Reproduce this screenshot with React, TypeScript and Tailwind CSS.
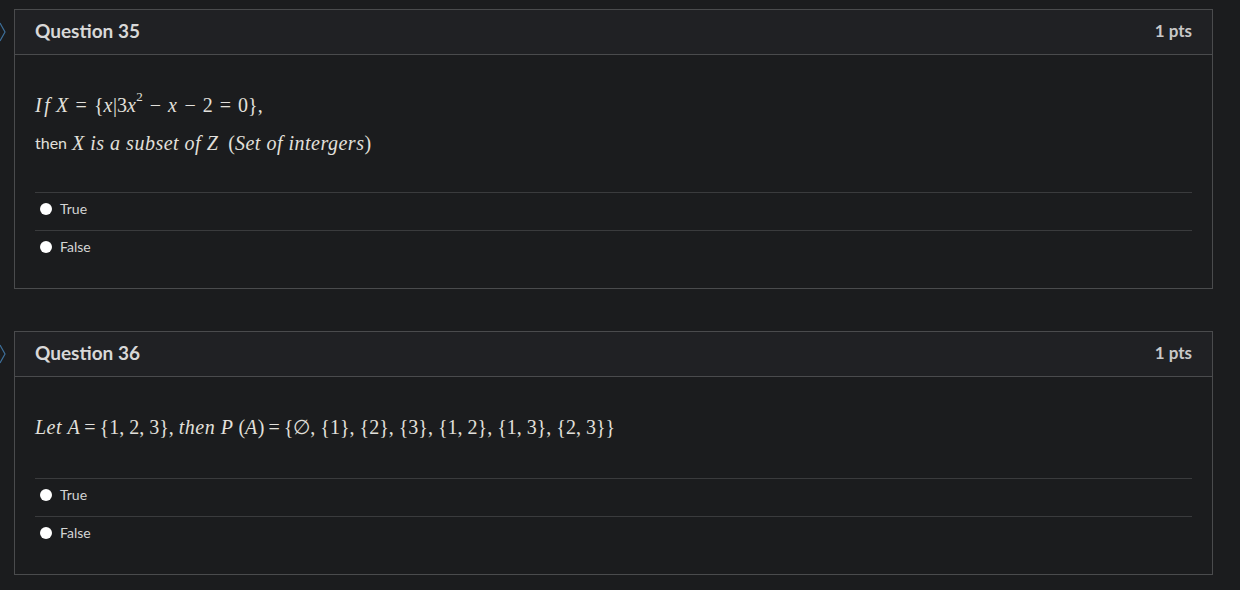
import React from 'react'

const serif = { fontFamily: '"Liberation Serif", "DejaVu Serif", serif' }

function I({ children }: { children: React.ReactNode }) {
    return <span className="italic tracking-[0.5px]">{children}</span>
}

function Op({ children, wide }: { children: React.ReactNode; wide?: boolean }) {
    return <span className={wide ? 'mx-[7px]' : 'mx-[4px]'}>{children}</span>
}

function Chevron() {
    return (
        <svg width="14" height="20" viewBox="0 0 14 20" className="block">
            <polyline points="0,1 5,10 0,19" fill="none" stroke="#3d6f9a" strokeWidth="1.2" />
        </svg>
    )
}

function Answer({ label }: { label: string }) {
    return (
        <div className="h-[38px] border-t border-[#3a3b3d] flex items-center pl-[5px] pb-[6px] gap-[8px]">
            <div className="w-[12px] h-[12px] rounded-full bg-white" />
            <span className="text-[14px] text-[#d4d4d4]">{label}</span>
        </div>
    )
}

function Question({ num, gap, children }: { num: number; gap: string; children: React.ReactNode }) {
    return (
        <div className="flex items-start">
            <div className="w-[14px] pt-[13px]">
                <Chevron />
            </div>
            <div className="w-[1199px] border border-[#4a4b4d]">
                <div className="h-[45px] bg-[#202124] border-b border-[#4a4b4d] flex items-center justify-between px-[20px] pb-[2px]">
                    <h2 className="text-[19px] font-bold text-[#d8d8d8]">Question {num}</h2>
                    <span className="text-[17px] font-bold text-[#c8c8c8]">1 pts</span>
                </div>
                <div className="px-[20px] pt-[20px] pb-[20px]">
                    <div className={`pt-[11px] text-[#e2e0dc] ${gap}`}>{children}</div>
                    <Answer label="True" />
                    <Answer label="False" />
                </div>
            </div>
        </div>
    )
}

export default function App() {
    return (
        <div className="min-h-[590px] bg-[#1b1c1e] pt-[9px] flex flex-col gap-[42px]" style={{ fontFamily: 'Lato, "Open Sans", sans-serif' }}>
            <Question num={35} gap="pb-[30px]">
                <div className="h-[38px] flex items-center text-[20px]" style={serif}>
                    <I>I&#8202;f&nbsp;X</I>
                    <Op wide>=</Op>
                    <span>{'{'}</span>
                    <I>x</I>
                    <span>|3</span>
                    <I>x</I>
                    <span className="text-[13px] relative -top-[8px]">2</span>
                    <Op wide>−</Op>
                    <I>x</I>
                    <Op wide>−</Op>
                    <span>2</span>
                    <Op wide>=</Op>
                    <span>0{'}'},</span>
                </div>
                <div className="h-[38px] flex items-center">
                    <span className="text-[16px] mr-[5px]">then</span>
                    <span className="text-[20px]" style={serif}>
                        <I>X&nbsp;is&nbsp;a&nbsp;subset&nbsp;of&nbsp;Z</I>
                        <span>&nbsp;&nbsp;(</span>
                        <I>Set&nbsp;of&nbsp;intergers</I>
                        <span>)</span>
                    </span>
                </div>
            </Question>
            <Question num={36} gap="pb-[32px]">
                <div className="h-[38px] flex items-center text-[20px]" style={serif}>
                    <I>Let&nbsp;A</I>
                    <Op>=</Op>
                    <span>{'{1, 2, 3},'}&nbsp;</span>
                    <I>then&nbsp;P</I>
                    <span>&nbsp;(</span>
                    <I>A</I>
                    <span>)</span>
                    <Op>=</Op>
                    <span>{'{∅, {1}, {2}, {3}, {1, 2}, {1, 3}, {2, 3}}'}</span>
                </div>
            </Question>
        </div>
    )
}
